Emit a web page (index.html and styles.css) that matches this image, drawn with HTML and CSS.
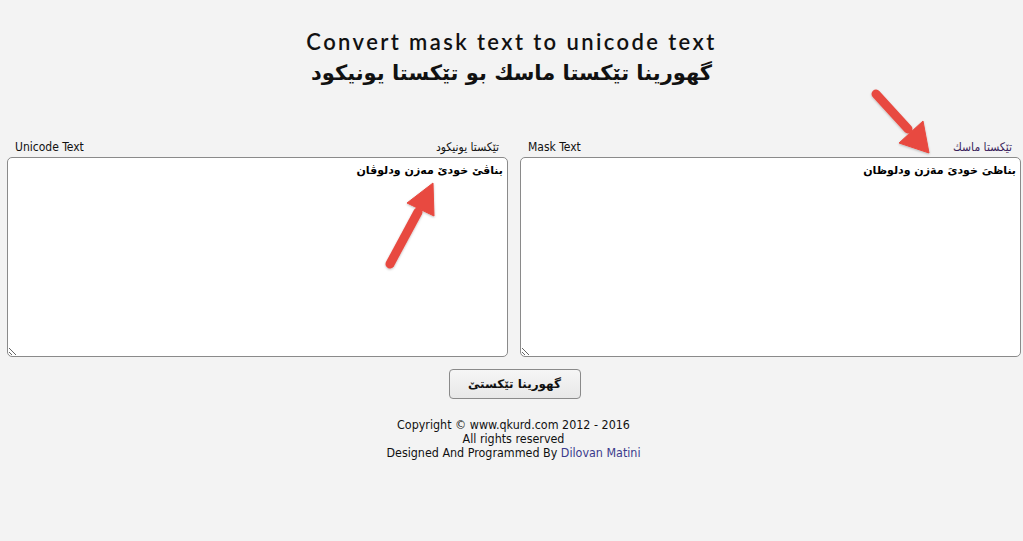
FILE: index.html
```html
<!DOCTYPE html>
<html lang="ku">
<head>
  <meta charset="UTF-8">
  <title>Convert mask text to unicode text</title>
  <link rel="stylesheet" href="styles.css">
</head>
<body>

  <div class="header">
    <h1>Convert mask text to unicode text</h1>
    <h2 dir="rtl">گهورینا تێکستا ماسك بو تێکستا یونیکود</h2>
  </div>

  <div class="boxes">
    <div class="box">
      <div class="box-labels">
        <span>Unicode Text</span>
        <span dir="rtl">تێکستا یونیکود</span>
      </div>
      <textarea id="unicodeText" dir="rtl">بناڤێ خودێ مەزن ودلوڤان</textarea>
    </div>

    <div class="box">
      <div class="box-labels">
        <span>Mask Text</span>
        <span dir="rtl" class="label-mask">تێکستا ماسك</span>
      </div>
      <textarea id="maskText" dir="rtl">بناظىَ خودىَ مةزن ودلوظان</textarea>
    </div>
  </div>

  <div class="actions">
    <button id="convertBtn" dir="rtl">گهورینا تێکستێ</button>
  </div>

  <div class="footer">
    Copyright &copy; www.qkurd.com 2012 - 2016<br>
    All rights reserved<br>
    Designed And Programmed By <a href="#">Dilovan Matini</a>
  </div>

  <!-- annotation arrows -->
  <svg class="arrows" width="1023" height="541" viewBox="0 0 1023 541">
    <defs>
      <filter id="shadow" x="-20%" y="-20%" width="140%" height="140%">
        <feDropShadow dx="0" dy="1" stdDeviation="1" flood-color="#000" flood-opacity="0.25"/>
      </filter>
    </defs>
    <g fill="#e84a40" stroke="#e84a40" filter="url(#shadow)">
      <line x1="390" y1="264" x2="418" y2="212" stroke-width="9" stroke-linecap="round"/>
      <polygon points="433,183 407,203 434,216" stroke-width="1" stroke-linejoin="round"/>
      <line x1="876" y1="94" x2="908" y2="129" stroke-width="9" stroke-linecap="round"/>
      <polygon points="929,153 899,143 923,121" stroke-width="1" stroke-linejoin="round"/>
    </g>
  </svg>

  <script>
    // swap table for the mask letters
    const map = { 'ظ': 'ڤ', 'ة': 'ە', 'ىَ': 'ێ' };
    document.getElementById('convertBtn').addEventListener('click', () => {
      let txt = document.getElementById('maskText').value;
      Object.keys(map).forEach(k => { txt = txt.split(k).join(map[k]); });
      document.getElementById('unicodeText').value = txt;
    });
  </script>

</body>
</html>
```

FILE: styles.css
```css
body {
  margin: 0;
  background: #f3f3f3;
  font-family: "DejaVu Sans Condensed", "DejaVu Sans", sans-serif;
  font-size: 12px;
  color: #111;
  position: relative;
}
.header {
  text-align: center;
  padding-top: 27px;
}
.header h1 {
  margin: 0;
  font-family: Lato, sans-serif;
  font-weight: 600;
  font-size: 22px;
  letter-spacing: 2.4px;
  line-height: 30px;
  color: #111;
}
.header h2 {
  margin: 0;
  font-family: "DejaVu Sans", sans-serif;
  font-weight: bold;
  font-size: 21px;
  line-height: 32px;
}
.boxes {
  display: grid;
  grid-template-columns: 1fr 1fr;
  gap: 12px;
  padding: 0 2px 0 7px;
  margin-top: 50px;
}
.box-labels {
  display: flex;
  justify-content: space-between;
  padding: 0 9px 0 8px;
  line-height: 16px;
  margin-bottom: 2px;
}
.label-mask {
  color: #3b1f5c;
}
.box textarea {
  display: block;
  box-sizing: border-box;
  width: 100%;
  height: 200px;
  margin: 0;
  padding: 6px 4px;
  border: 1px solid #8a8a8a;
  border-radius: 5px;
  background: #fff;
  font-family: "DejaVu Sans", sans-serif;
  font-weight: bold;
  font-size: 11px;
  color: #000;
}
.actions {
  text-align: center;
  margin-top: 12px;
  padding-left: 6px;
}
.actions button {
  width: 132px;
  height: 30px;
  border: 1px solid #8a8a8a;
  border-radius: 4px;
  background: linear-gradient(#f6f6f6, #e8e8e8);
  font-family: "DejaVu Sans", sans-serif;
  font-weight: bold;
  font-size: 12px;
  color: #111;
}
.footer {
  text-align: center;
  margin-top: 19px;
  line-height: 14px;
  padding-left: 4px;
  font-size: 12.4px;
}
.footer a {
  color: #3a3a8c;
  text-decoration: none;
}
.arrows {
  position: absolute;
  left: 0;
  top: 0;
  pointer-events: none;
}
```
